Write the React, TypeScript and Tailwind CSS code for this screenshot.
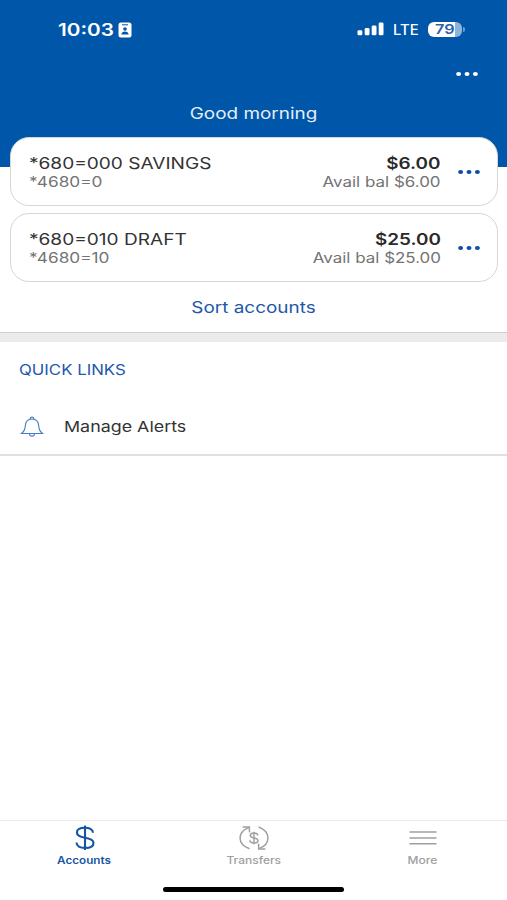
import { ReactNode } from "react";
import clsx from "clsx";

interface Account {
  name: string;
  number: string;
  balance: string;
}

const accounts: Account[] = [
  { name: "*680=000 SAVINGS", number: "*4680=0", balance: "$6.00" },
  { name: "*680=010 DRAFT", number: "*4680=10", balance: "$25.00" },
];

function Dots({ className }: { className?: string }) {
  return (
    <svg viewBox="0 0 22 4" className={clsx("h-1 w-[22px]", className)} fill="currentColor">
      <ellipse cx="2.6" cy="2" rx="2.5" ry="1.9" />
      <ellipse cx="11" cy="2" rx="2.5" ry="1.9" />
      <ellipse cx="19.4" cy="2" rx="2.5" ry="1.9" />
    </svg>
  );
}

function StatusBar() {
  return (
    <div className="flex h-[58px] items-center pl-[58px] pr-[42px] text-white">
      <span className="mt-[3px] w-[60px] origin-left scale-x-[1.22] text-[17px] font-semibold whitespace-nowrap">
        10:03
      </span>
      <svg viewBox="0 0 14 16" className="mt-px h-4 w-3.5">
        <rect x="0.5" y="0.5" width="13" height="15" rx="2.5" fill="#fff" />
        <path d="M4 2.8h6" stroke="#0056a8" strokeWidth="1" />
        <circle cx="7" cy="7" r="1.8" fill="#0056a8" />
        <path d="M3.4 12.6c0-4 7.2-4 7.2 0z" fill="#0056a8" />
      </svg>

      <svg viewBox="0 0 27 14" className="ml-auto h-3.5 w-[27px]" fill="#fff">
        <rect x="0.5" y="8.2" width="4.8" height="5.1" rx="1.3" />
        <rect x="7.7" y="6" width="4.8" height="7.3" rx="1.3" />
        <rect x="14.7" y="3.4" width="4.8" height="9.9" rx="1.3" />
        <rect x="21.7" y="0.6" width="4.8" height="12.7" rx="1.3" />
      </svg>
      <span className="mt-px ml-[9px] w-[35px] origin-left scale-x-[1.06] text-[14px] font-medium">LTE</span>
      <div className="flex items-center">
        <div className="flex h-[15px] w-[34px] items-center justify-center rounded-[6px] bg-linear-to-r from-white from-79% to-[#8db5dc] to-79%">
          <span className="mt-px scale-x-[1.25] text-[13px] leading-[15px] font-semibold text-[#2c62a8]">79</span>
        </div>
        <div className="ml-px h-[5px] w-0.5 rounded-r-full bg-[#6da0d0]" />
      </div>
    </div>
  );
}

function AccountCard({ account }: { account: Account }) {
  return (
    <div className="flex h-[69px] items-center rounded-[19px] border border-[#d6d6d6] bg-white pr-[17px] pl-[18px]">
      <div className="flex-1 pt-[2px] whitespace-nowrap">
        <p className="origin-left scale-x-[1.23] text-[15.5px] leading-[19px] text-[#333]">
          {account.name}
        </p>
        <p className="origin-left scale-x-[1.23] text-[14px] leading-[18px] text-[#737373]">
          {account.number}
        </p>
      </div>
      <div className="pt-[2px] text-right whitespace-nowrap">
        <p className="origin-right scale-x-[1.22] text-[15.5px] leading-[19px] font-semibold text-[#2a2a2a]">
          {account.balance}
        </p>
        <p className="origin-right scale-x-[1.21] text-[14px] leading-[18px] text-[#737373]">
          Avail bal {account.balance}
        </p>
      </div>
      <Dots className="ml-[17px] text-[#0b4ea5]" />
    </div>
  );
}

function DollarIcon() {
  return (
    <svg viewBox="0 0 20 26" className="h-[26px] w-5" fill="none" stroke="currentColor" strokeWidth="2.1">
      <path d="M10 0.6v24.4" />
      <path d="M18 7.8c0-3.3-3.2-5-8-5S1.9 4.5 1.9 7.6c0 3.3 3.1 4.3 8.1 5.1s8.500 1.900 8.500 5.200-3.500 5-8.500 5-8.500-1.800-8.500-5.300" />
    </svg>
  );
}

function TransferIcon() {
  return (
    <svg viewBox="0 0 30 26" className="h-[26px] w-[30px]" fill="none" stroke="currentColor" strokeWidth="1.5">
      <path d="M10.5 23.8C-1.8 19.5-2 7.2 9.6 2.6" />
      <path d="M3.6 2.1l6.7-.1.2 5.4" />
      <path d="M19.5 2C31.800 6.500 32 18.800 20.400 23.400" />
      <path d="M26.400 23.900l-6.700.1-.2-5.400" />
      <path d="M15 6.800v12.400" />
      <path d="M18.700 10.500c0-1.600-1.600-2.400-3.700-2.400s-3.700.8-3.700 2.300c0 1.600 1.700 2.100 3.700 2.500s4 .9 4 2.600-1.800 2.500-4 2.500-4.100-.9-4.100-2.700" />
    </svg>
  );
}

function MenuIcon() {
  return (
    <svg viewBox="0 0 28 26" className="h-[26px] w-7" stroke="currentColor" strokeWidth="1.5">
      <path d="M0.5 7h27M0.5 13h27M0.5 18.800h27" />
    </svg>
  );
}

interface TabProps {
  label: string;
  icon: ReactNode;
  active?: boolean;
}

function Tab({ label, icon, active }: TabProps) {
  return (
    <button
      className={clsx(
        "flex flex-1 flex-col items-center pt-[4px]",
        active ? "text-[#1555a5]" : "text-[#a0a0a0]",
      )}
    >
      {icon}
      <span
        className={clsx(
          "mt-[3px] text-[10px] leading-3",
          active ? "scale-x-[1.17] font-semibold" : "scale-x-[1.2] font-medium",
        )}
      >
        {label}
      </span>
    </button>
  );
}

export default function App() {
  return (
    <div className="flex h-[900px] w-[507px] flex-col overflow-hidden bg-white font-['Inter','Liberation_Sans',sans-serif]">
      <header className="h-[167px] shrink-0 bg-[#0056a8]">
        <StatusBar />
        <div className="flex justify-end pt-[14px] pr-[29px] text-white">
          <Dots />
        </div>
        <h1 className="mt-[28px] scale-x-[1.22] text-center text-[15.5px] leading-5 text-[#e6eef8]">
          Good morning
        </h1>
      </header>

      <section className="-mt-[30px] flex flex-col gap-[7px] pr-[9px] pl-[10px]">
        {accounts.map((account) => (
          <AccountCard key={account.name} account={account} />
        ))}
      </section>

      <button className="mt-[16px] scale-x-[1.22] text-[15.5px] leading-5 text-[#1d58a8]">
        Sort accounts
      </button>

      <div className="mt-[14px] h-[10px] shrink-0 border-t border-[#cfcfcf] bg-[#ebebeb]" />

      <section className="border-b-2 border-[#e0e0e0] pl-[19px]">
        <h2 className="mt-[18px] origin-left scale-x-[1.2] text-[14px] leading-5 text-[#2458ae]">
          QUICK LINKS
        </h2>
        <div className="flex h-[74px] items-center pt-[20px]">
          <svg viewBox="0 0 26 22" className="h-[22px] w-[26px]" fill="none" stroke="#4a7cc4" strokeWidth="1.1">
            <path d="M2.5 17.500c3-2.200 3.600-4.200 3.800-7.600C6.600 5.500 9.200 3 13 3s6.400 2.500 6.700 6.900c.2 3.400.8 5.400 3.800 7.600z" />
            <path d="M11.200 3.200c0-3 3.600-3 3.600 0M10.400 17.700c.3 3.200 4.900 3.200 5.200 0" />
          </svg>
          <span className="ml-[19px] origin-left scale-x-[1.19] text-[15px] text-[#333]">
            Manage Alerts
          </span>
        </div>
      </section>

      <nav className="mt-auto flex h-[80px] shrink-0 flex-col border-t border-[#e9e9e9]">
        <div className="flex h-[66px]">
          <Tab label="Accounts" icon={<DollarIcon />} active />
          <Tab label="Transfers" icon={<TransferIcon />} />
          <Tab label="More" icon={<MenuIcon />} />
        </div>
        <div className="mx-auto h-[5px] w-[181px] shrink-0 rounded-full bg-black" />
      </nav>
    </div>
  );
}
